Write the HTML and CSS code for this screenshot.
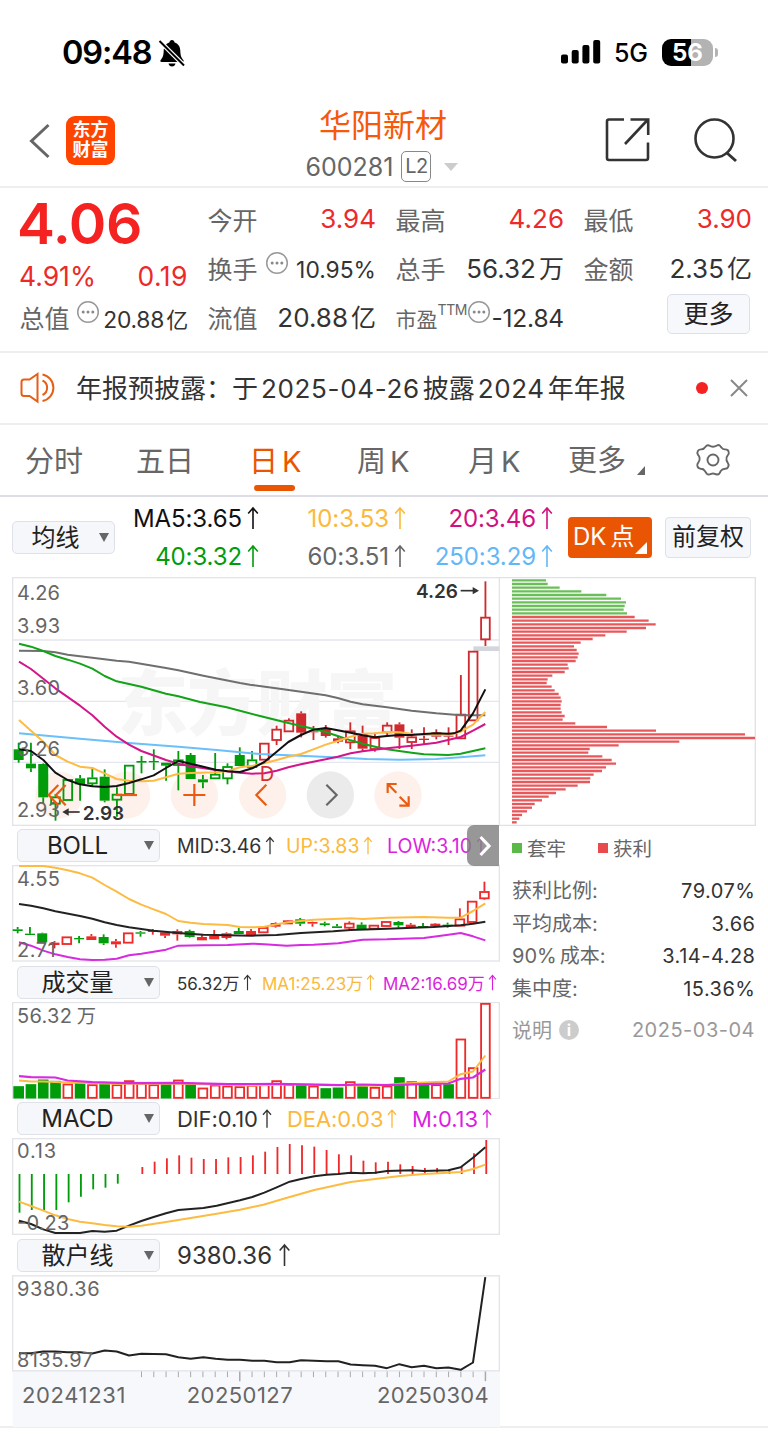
FILE: index.html
```html
<!DOCTYPE html>
<html lang="zh-CN">
<head>
<meta charset="utf-8">
<title>华阳新材 600281</title>
<link rel="stylesheet" href="styles.css">
</head>
<body>
<svg class="defs" width="0" height="0">
  <symbol id="up" viewBox="0 0 12 24"><path d="M6 23V2M1.2 7.5 6 2l4.800 5.500" fill="none" stroke="currentColor" stroke-width="1.600"/></symbol>
  <symbol id="more" viewBox="0 0 24 24"><circle cx="12" cy="12" r="10.300" fill="none" stroke="#999" stroke-width="1.500"/><g fill="#888"><circle cx="7.200" cy="12" r="1.500"/><circle cx="12" cy="12" r="1.500"/><circle cx="16.800" cy="12" r="1.500"/></g></symbol>
</svg>

<div class="status">
  <span class="clock">09:48</span>
  <svg class="bell" width="28" height="30" viewBox="0 0 28 30"><path d="M14 2c1.500 0 2.400 1 2.600 2.400 3.900 1.200 5.600 4.500 5.700 8.300.1 5.300 1.200 7 3 9.300.8 1.100.3 2-1 2H3.700c-1.300 0-1.800-.9-1-2 1.800-2.300 2.900-4 3-9.300.1-3.800 1.800-7.100 5.700-8.300C11.600 3 12.500 2 14 2ZM10.500 25.500h7c-.4 1.900-1.700 3-3.500 3s-3.100-1.100-3.500-3Z"/><path d="M2 3.500 26.500 28" stroke="#fff" stroke-width="4.500"/><path d="M1.500 3 26 27.500" stroke="#000" stroke-width="2"/></svg>
  <svg class="signal" width="40" height="26" viewBox="0 0 40 26"><rect y="15.500" width="7" height="9" rx="2"/><rect x="10.700" y="11" width="7" height="13.500" rx="2"/><rect x="21.400" y="6" width="7" height="18.500" rx="2"/><rect x="32.200" y="1" width="7" height="23.500" rx="2"/></svg>
  <span class="net">5G</span>
  <span class="battery">56</span><i class="nub"></i>
</div>

<header class="header">
  <svg class="back" width="22" height="36" viewBox="0 0 22 36"><path d="M19.500 2 2.500 18l17 16" fill="none" stroke="#666" stroke-width="3"/></svg>
  <div class="logo"><span>东方</span><span>财富</span></div>
  <div class="title">
    <h1>华阳新材</h1>
    <div class="code"><span>600281</span><b>L2</b><i></i></div>
  </div>
  <svg class="share" width="46" height="46" viewBox="0 0 46 46"><path d="M19 2.500H4q-2 0-2 2V41q0 2 2 2h37q2 0 2-2V25.500M25.500 2.500H43.200V18M42.500 3 20 27" fill="none" stroke="#333" stroke-width="2.600"/></svg>
  <svg class="search" width="46" height="46" viewBox="0 0 46 46"><circle cx="21.500" cy="21.500" r="19" fill="none" stroke="#333" stroke-width="2.600"/><path d="m34 36 9 8" stroke="#333" stroke-width="3"/></svg>
</header>

<section class="quote">
  <div class="price">
    <strong>4.06</strong>
    <div class="change"><span>4.91%</span><span class="delta">0.19</span></div>
    <div class="cell sm"><label>总值</label><svg class="dots" width="24" height="24"><use href="#more"/></svg><em>20.88<u>亿</u></em></div>
  </div>
  <div class="col">
    <div class="cell red"><label>今开</label><em>3.94</em></div>
    <div class="cell sm"><label>换手</label><svg class="dots gap" width="24" height="24"><use href="#more"/></svg><em>10.95%</em></div>
    <div class="cell"><label>流值</label><em>20.88<u>亿</u></em></div>
  </div>
  <div class="col">
    <div class="cell red"><label>最高</label><em>4.26</em></div>
    <div class="cell"><label>总手</label><em>56.32<u>万</u></em></div>
    <div class="cell pe"><label>市盈<sup>TTM</sup></label><svg class="dots" width="24" height="24"><use href="#more"/></svg><em>-12.84</em></div>
  </div>
  <div class="col">
    <div class="cell red"><label>最低</label><em>3.90</em></div>
    <div class="cell"><label>金额</label><em>2.35<u>亿</u></em></div>
    <div class="cell end"><button class="morebtn">更多</button></div>
  </div>
</section>

<section class="notice">
  <svg width="38" height="32" viewBox="0 0 38 32"><path d="M17.500 2 9.500 7.500H4q-2.500 0-2.500 2.500v11.500q0 2.500 2.500 2.500h5.500l8 5.500Z" fill="none" stroke="#e65f16" stroke-width="2"/><path d="M22.500 8.500a8 8 0 0 1 0 14.500M22.500 2.500a13.500 13.500 0 0 1 0 26.500" fill="none" stroke="#e65f16" stroke-width="2"/></svg>
  <p>年报预披露：<span>于<b>2025-04-26</b>披露<b>2024</b>年年报</span></p>
  <i class="reddot"></i>
  <svg width="18" height="18" viewBox="0 0 18 18"><path d="m1 1 16 16M17 1 1 17" stroke="#888" stroke-width="2"/></svg>
</section>

<nav class="tabs">
  <span>分时</span><span>五日</span><span class="active">日<b>K</b></span><span>周<b>K</b></span><span>月<b>K</b></span><span class="more">更多</span>
  <svg width="36" height="34" viewBox="0 0 36 34"><path d="M14 2.500q4 2.500 8 0 2-1.200 3.500.8l1.200 1.500q1.300 1.800 3.500 1.600 3 0 3.500 2.500.5 2-1 3.500-1.800 2.100-1.200 4.600.2 1.200 1.200 2.600 1.500 2 .5 4.200-.8 2-3 2-3 0-4.500 2.200-1.200 3.700-3.700 3.500-1.200 0-2.200-.6-1.800-.9-3.600 0-3 1.500-4.500-.3l-2-2.800q-1.200-2-4-2-2.600-.2-3.300-2.700-.5-2 1-3.700 1.800-2.400 1.100-5-.3-1.200-1.500-2.500Q1.700 9.500 3 7.700q1-1.400 3.300-1.300 2.700-.2 4-2.400Q12 1.700 14 2.500Z" fill="none" stroke="#666" stroke-width="1.900"/><circle cx="18" cy="17" r="5.500" fill="none" stroke="#666" stroke-width="1.900"/></svg>
</nav>

<section class="mabar">
  <button class="drop small">均线<i></i></button>
  <div class="mas">
    <span class="black">MA5:3.65<svg><use href="#up"/></svg></span>
    <span class="yellow">10:3.53<svg><use href="#up"/></svg></span>
    <span class="pink">20:3.46<svg><use href="#up"/></svg></span>
    <span class="green">40:3.32<svg><use href="#up"/></svg></span>
    <span class="gray">60:3.51<svg><use href="#up"/></svg></span>
    <span class="blue">250:3.29<svg><use href="#up"/></svg></span>
  </div>
  <button class="dk">DK<u>点</u></button>
  <button class="fq">前复权</button>
</section>

<main class="main">
  <div class="left">
    <svg id="kline" width="488" height="249" viewBox="36 21 1464 747"></svg>
    <div class="ind">
      <button class="drop">BOLL<i></i></button>
      <div class="vals boll"><span>MID:3.46<svg><use href="#up"/></svg></span><span class="yellow">UP:3.83<svg><use href="#up"/></svg></span><span class="purple">LOW:3.10<svg><use href="#up"/></svg></span></div>
      <div class="expand"><svg width="14" height="22" viewBox="0 0 14 22"><path d="m2.500 2 8.500 9-8.500 9" fill="none" stroke="#fff" stroke-width="3.200"/></svg></div>
    </div>
    <svg id="boll" width="488" height="97.500" viewBox="36 120 1464 292.500"></svg>
    <div class="ind">
      <button class="drop">成交量<i></i></button>
      <div class="vals vol"><span>56.32万<svg><use href="#up"/></svg></span><span class="yellow">MA1:25.23万<svg><use href="#up"/></svg></span><span class="purple">MA2:16.69万<svg><use href="#up"/></svg></span></div>
    </div>
    <svg id="volume" width="488" height="97.500" viewBox="36 529.500 1464 292.500"></svg>
    <div class="ind">
      <button class="drop">MACD<i></i></button>
      <div class="vals macd"><span>DIF:0.10<svg><use href="#up"/></svg></span><span class="yellow">DEA:0.03<svg><use href="#up"/></svg></span><span class="purple">M:0.13<svg><use href="#up"/></svg></span></div>
    </div>
    <svg id="macd" width="488" height="97.500" viewBox="36 129 1464 292.500"></svg>
    <div class="ind">
      <button class="drop">散户线<i></i></button>
      <div class="vals retail"><span>9380.36<svg><use href="#up"/></svg></span></div>
    </div>
    <svg id="retail" width="488" height="152.500" viewBox="36 538.500 1464 457.500"></svg>
  </div>
  <aside class="right">
    <svg id="chips" width="256" height="249" viewBox="0 21 768 747"></svg>
    <div class="legend"><i class="lg"></i><span>套牢</span><i class="lr"></i><span>获利</span></div>
    <dl class="stats">
      <div><dt>获利比例:</dt><dd>79.07%</dd></div>
      <div><dt>平均成本:</dt><dd>3.66</dd></div>
      <div><dt><b>90%</b>成本:</dt><dd>3.14-4.28</dd></div>
      <div><dt>集中度:</dt><dd>15.36%</dd></div>
    </dl>
    <div class="foot"><span>说明</span><i>i</i><time>2025-03-04</time></div>
  </aside>
</main>
<script src="charts.js"></script>
</body>
</html>
```

FILE: styles.css
```css
* { box-sizing: border-box; }
body { margin: 0; width: 768px; height: 1445px; overflow: hidden; background: #fff; color: #333; font-family: Inter, "Noto Sans CJK SC", sans-serif; }
b, em, i, u, h1, button, strong { font: inherit; text-decoration: none; margin: 0; }
p, dl, dd { margin: 0; }
svg { display: block; flex: none; }
.defs { position: absolute; }
span, label { white-space: nowrap; }

.status { display: flex; align-items: center; height: 90px; padding: 14px 0 0 62px; color: #000; }
.clock { font-size: 32.500px; font-weight: 600; width: 96px; letter-spacing: -1.100px; }
.bell { margin-top: 2px; }
.signal { margin-left: 375px; }
.net { font-size: 25px; font-weight: 500; margin-left: 13px; width: 48px; letter-spacing: -.2px; padding-top: 2px; }
.battery { width: 51px; height: 27px; border-radius: 9px; background: linear-gradient(90deg, #000 57%, #b3b3b3 57%); color: #fff; font-size: 24px; font-weight: 700; line-height: 27px; text-align: center; }
.nub { width: 3px; height: 9px; margin-left: 2px; border-radius: 0 4px 4px 0; background: #b3b3b3; }

.header { display: flex; align-items: center; height: 98px; padding: 4px 0 0 29px; border-bottom: 2px solid #eee; }
.back { margin-top: 1px; }
.logo { display: flex; flex-direction: column; justify-content: center; width: 49px; height: 49px; margin-left: 15px; border-radius: 9px; background: #ff4400; color: #fff; font-size: 18px; font-weight: 700; line-height: 20px; text-align: center; }
.title { width: 240px; margin-left: 148px; padding-top: 12px; text-align: center; }
.title h1 { color: #f6590c; font-size: 32px; line-height: 42px; }
.code { display: flex; justify-content: center; align-items: center; height: 42px; margin-top: -1px; font-size: 25px; color: #666; letter-spacing: 0; padding-right: 2px; }
.code b { width: 30px; height: 31px; margin-left: 8px; border: 1.500px solid #888; border-radius: 5px; font-size: 20px; line-height: 29px; letter-spacing: -.5px; }
.code i { margin-left: 13px; border: 7px solid transparent; border-top: 8px solid #ccc; border-bottom: 0; }
.share { margin-left: 102px; }
.search { margin-left: 42px; }

.quote { display: grid; grid-template-columns: repeat(4, 168px); gap: 20px; height: 165px; padding: 7px 0 0 20px; border-bottom: 2px solid #eee; }
.col { margin-top: -1px; }
.price strong { display: block; height: 56px; margin-left: -3px; color: #f52222; font-size: 57px; font-weight: 600; line-height: 57px; letter-spacing: -.4px; }
.change { display: flex; justify-content: space-between; height: 41px; margin-left: -1px; padding-top: 4px; font-size: 26.500px; line-height: 42px; color: #ec2a2a; letter-spacing: 0; }
.delta { letter-spacing: .5px; }
.cell { display: flex; align-items: center; justify-content: space-between; height: 49px; font-size: 26px; }
.cell label { color: #666; font-size: 25px; margin-left: -.5px; }
.cell em { letter-spacing: 0; margin-top: -1px; }
.cell u { margin-left: 3px; font-size: 25px; }
.cell.red em { color: #ec2a2a; }
.cell.sm em { font-size: 22.800px; padding-top: 4px; }
.cell.sm u { font-size: 22px; margin-left: 2px; }
.cell .dots { margin: -10px 0 0 4px; }
.cell .gap { margin-right: 4px; }
.price .cell em { letter-spacing: -.2px; }
.cell.pe label { font-size: 21px; padding-top: 3px; }
.pe sup { display: inline-block; font-size: 14px; line-height: 10px; vertical-align: 12px; letter-spacing: -.4px; }
.cell.pe .dots { margin-left: 0; }
.cell.pe em { font-size: 24.500px; letter-spacing: -.2px; padding-top: 3px; }
.cell.end { justify-content: flex-end; }
.morebtn { width: 83px; height: 40px; margin: -5px 2px 0 0; padding: 0; border: 1.500px solid #dde0ea; border-radius: 5px; background: #f7f8fc; color: #222; font-size: 25px; line-height: 36px; }

.notice { display: flex; align-items: center; height: 72px; padding-left: 20px; border-bottom: 2px solid #eee; }
.notice p { width: 617px; margin: -4px 0 0 18px; font-size: 26px; white-space: nowrap; }
.notice b { margin: 0 3px; letter-spacing: .65px; }
.reddot { width: 12px; height: 12px; margin: 0 22px 0 3px; border-radius: 50%; background: #f52222; }

.tabs { display: flex; height: 72px; border-bottom: 2px solid #dddde6; color: #666; font-size: 29px; line-height: 73px; padding-left: 25px; }
.tabs span { width: 111px; }
.tabs b { margin-left: 4px; }
.tabs .active { position: relative; display: flex; width: 108px; margin-left: 2px; color: #ea5504; }
.tabs .active::after { content: ""; position: absolute; left: 5px; bottom: 4px; width: 41px; height: 6px; border-radius: 3px; background: #ea5504; }
.tabs .more { width: 127px; display: flex; align-items: center; margin-left: -11px; }
.tabs .more::after { content: ""; margin: 20px 0 0 11px; border-left: 8px solid transparent; border-bottom: 9px solid #666; }
.tabs svg { margin-top: 18px; }

.mabar { display: flex; align-items: center; height: 80px; padding-left: 12px; }
.drop { position: relative; flex: none; width: 143px; height: 33px; margin: 0; padding: 0 22px 0 0; border: 1.500px solid #dfe1e8; border-radius: 5px; background: #f6f7fb; color: #222; font-size: 24px; line-height: 29px; text-align: center; }
.drop i { position: absolute; right: 5px; top: 11px; border: 5px solid transparent; border-top: 9px solid #666; border-bottom: 0; }
.drop.small { width: 103px; padding-right: 16px; }
.mas { display: grid; grid-template-columns: 144px 147px 147px; grid-auto-rows: 38px; width: 453px; font-size: 24px; }
.mas span { display: flex; align-items: center; justify-content: flex-end; letter-spacing: -.1px; }
.mas svg { width: 12px; height: 24px; margin-left: 5px; }
.black { color: #111; } .yellow { color: #fbb93c; } .pink { color: #d0117f; } .green { color: #009c0a; } .gray { color: #666; } .blue { color: #62b8f6; } .purple { color: #dc1fdf; }
.dk, .fq { height: 41px; padding: 0; border-radius: 4px; font-size: 24px; line-height: 38px; white-space: nowrap; }
.dk { position: relative; width: 84px; border: 0; background: #ea5504; color: #fff; text-align: left; padding-left: 5px; }
.dk u { margin-left: 4px; }
.dk::after { content: ""; position: absolute; right: 5px; bottom: 4px; border-left: 12px solid transparent; border-bottom: 12px solid #fff; }
.fq { width: 86px; margin-left: 13px; border: 1.500px solid #dfe1e8; background: #f6f7fb; color: #222; }

.main { display: grid; grid-template-columns: 488px 256px; padding-left: 12px; height: 851px; border-bottom: 2px solid #eee; }
.ind { position: relative; display: flex; align-items: center; height: 39px; padding-left: 5px; }
.vals { display: grid; margin-left: 17px; font-size: 20px; }
.vals span { display: flex; align-items: center; color: inherit; }
.vals .yellow { color: #fbb93c; } .vals .purple { color: #dc1fdf; }
.vals svg { width: 10px; height: 19px; margin-left: 4px; }
.boll { grid-template-columns: 109px 101px 110px; font-size: 19.500px; }
.vol { grid-template-columns: 85px 121px 118px; font-size: 17px; }
.vol svg { height: 17px; width: 9px; margin-left: 3px; }
.macd { grid-template-columns: 110px 125px 90px; font-size: 22px; letter-spacing: -.1px; }
.macd svg { height: 21px; }
.retail { font-size: 24px; }
.retail svg { height: 24px; width: 13px; margin-left: 6px; }
.expand { position: absolute; right: 1px; top: -1px; width: 32px; height: 41px; padding: 10px 0 0 11px; border-radius: 7px 0 0 7px; background: rgba(128,128,128,.82); }

.legend { display: flex; align-items: center; height: 43px; padding-left: 12px; font-size: 19.500px; color: #666; }
.legend i { width: 10px; height: 10px; margin-right: 5px; }
.lg { background: #5bb947; } .lr { background: #e84a4d; margin-left: 32px; }
.stats { padding: 6px 1px 0 12px; font-size: 20px; }
.stats div { display: flex; justify-content: space-between; height: 32.700px; line-height: 32px; }
.stats dt { color: #666; } .stats dt b { margin-right: 3px; }
.stats dd { letter-spacing: .5px; margin-right: -.5px; }
.foot { display: flex; align-items: center; height: 30px; margin-top: 9px; padding: 0 1px 0 12px; color: #999; font-size: 20px; }
.foot i { width: 20px; height: 20px; margin-left: 7px; border-radius: 50%; background: #ccc; color: #fff; font-size: 16px; font-weight: 700; line-height: 20px; text-align: center; }
.foot time { margin-left: auto; letter-spacing: .5px; }
```

FILE: charts.js
```js
// Chart units are thirds of a CSS pixel.
const STEP = 36.85, X0 = 56;
const GREEN = '#009c0a', RED = '#cf2b2f', BRIGHT = '#ee2a2a';
const x = i => X0 + STEP * i;
const line = (pts, color, w = 6) => `<polyline points="${pts}" fill="none" stroke="${color}" stroke-width="${w}" stroke-linejoin="round"/>`;
const seg = (x1, y1, x2, y2, c, w) => `<path d="M${x1} ${y1}L${x2} ${y2}" stroke="${c}" stroke-width="${w}"/>`;
const text = (s, px, py, size, len, color = '#666', extra = '') => `<text x="${px}" y="${py}" font-size="${size}" textLength="${len}" fill="${color}" ${extra}>${s}</text>`;
const frame = (y1, y2) => `<rect x="38" y="${y1}" width="1460" height="${y2 - y1}" fill="none" stroke="#e3e4ea" stroke-width="4"/>`;
const put = (id, s) => { document.getElementById(id).innerHTML = s; };

// Candle: [colour, hollow, high, top, bottom, low]
function candles(list, red, dx = 0) {
  return list.map(([c, h, hi, t, b, lo], i) => {
    const col = c === 'g' ? GREEN : red, cx = x(i) + dx;
    let s = '';
    if (hi < t) s += seg(cx, hi, cx, t, col, 5.5);
    if (lo > b) s += seg(cx, b, cx, lo, col, 5.5);
    return s + (h
      ? `<rect x="${cx - 13}" y="${t + 2}" width="26" height="${b - t - 3}" fill="none" stroke="${col}" stroke-width="5.500"/>`
      : `<rect x="${cx - 15}" y="${t}" width="30" height="${b - t}" fill="${col}"/>`);
  }).join('');
}

const day = [
  ['g',0,518,538,570,578],['g',0,518,581,595,606],['g',0,580,582,682,700],['g',1,672,680,702,752],['g',1,628,628,691,691],
  ['g',0,615,625,643,692],['g',1,592,623,641,650],['g',0,598,620,692,697],['g',1,652,672,690,740],['g',1,585,585,673,673],
  ['g',0,558,573,578,610],['g',0,538,573,577,600],['g',0,578,578,587,632],['g',1,543,569,586,661],['g',0,549,555,627,627],
  ['g',0,615,628,637,655],['g',1,549,612,626,626],['g',1,580,589,626,643],['g',0,532,555,588,588],['g',1,543,569,592,595],
  ['r',1,519,519,570,570],['r',1,467,477,511,525],['r',1,445,450,485,485],['r',0,424,430,488,502],['r',0,468,484,487,510],
  ['r',0,465,475,498,503],['r',0,498,505,515,520],['r',1,457,482,518,537],['r',0,467,490,536,543],['r',1,488,502,538,545],
  ['r',1,457,465,488,500],['r',0,457,463,503,537],['r',1,478,500,517,537],['r',0,472,506,510,525],['r',0,478,487,500,508],
  ['r',0,472,497,500,525],['r',1,315,432,506,506],['r',1,243,243,452,452],['r',1,34,141,209,228]
];

const nav = [177, 380, 583, 788, 991, 1194];
const glyphs = ['M175 645l-29 30 29 31M197 645l-29 30 29 31', 'M347 675h64', 'M550 675h66M583 642v66', 'M799 644l-30 31 30 31', 'M979 644l31 31-31 31', 'M1190 642h-27v27M1164 643l25 25M1198 707h28v-28M1225 706l-26-26'];

put('kline',
  [210, 394, 577].map(y => seg(36, y, 1498, y, '#e5e6ef', 4)).join('') +
  `<text x="352" y="477" font-size="213" textLength="840" fill="#f6f6f7" font-weight="900">东方财富</text>` +
  frame(23, 766) +
  nav.map((c, i) => `<circle cx="${c}" cy="675" r="71" fill="${i === 4 ? '#ebebeb' : '#fef0ea'}"/>`).join('') +
  `<path d="M1420 236h78" stroke="#d3d6dc" stroke-width="14"/>` +
  candles(day, RED) +
  line('57,490 240,506 387,519 535,530 650,540 780,552 1000,562 1100,567 1200,569 1309,567 1382,562 1456,556', '#6ac0fa') +
  line('57,242 130,243 166,247 203,254 277,263 350,272 387,275 498,294 535,301 610,317 720,339 750,344 850,358 977,376 1013,384 1052,395 1088,403 1161,412 1235,422 1309,430 1382,436 1456,436', '#6f6f6f') +
  line('57,221 93,230 130,243 166,258 203,269 240,281 277,296 314,318 350,334 424,350 498,371 535,379 600,396 680,412 780,438 865,459 920,472 977,486 1013,498 1052,511 1088,521 1125,530 1161,538 1235,548 1272,553 1345,555 1382,551 1419,543 1456,535', '#12a318') +
  line('57,275 93,297 130,326 166,355 240,407 277,436 314,470 350,500 387,524 424,543 498,570 535,581 572,589 647,600 720,608 757,611 793,610 830,602 865,592 903,583 940,575 977,568 1013,560 1052,550 1088,544 1161,535 1235,527 1309,518 1382,501 1419,482 1456,462', '#d3158a') +
  line('57,450 93,482 130,515 166,555 203,575 240,590 277,594 314,610 350,627 387,632 424,634 461,632 498,622 535,611 572,609 647,607 683,603 720,592 757,587 793,580 830,570 865,560 903,552 940,538 977,524 1013,513 1052,500 1088,491 1125,490 1161,486 1198,487 1235,491 1272,494 1345,494 1382,485 1419,464 1456,426', '#fdbb42') +
  line('57,538 93,543 130,570 166,608 203,630 240,643 277,649 314,651 350,648 387,639 424,628 461,616 498,594 535,573 572,581 610,590 647,599 683,604 720,606 757,595 793,576 830,545 865,516 903,495 940,479 977,474 1013,481 1052,488 1088,496 1125,502 1161,498 1198,495 1235,495 1272,492 1309,490 1345,491 1362,490 1382,482 1419,430 1456,358', '#111') +
  [['4.26', 90], ['3.93', 188], ['3.60', 375], ['3.26', 557], ['2.93', 741]].map(([s, y]) => text(s, 51, y, 60, 129)).join('') +
  glyphs.map((d, i) => `<path d="${d}" fill="none" stroke="${i === 4 ? '#666' : '#ea5a10'}" stroke-width="6.500"/>`).join('') +
  text('D', 779, 632, 60, 42, '#d42f35') +
  text('4.26', 1248, 83, 57, 126, '#333', 'font-weight="600"') +
  `<path d="M1382 62h42" stroke="#333" stroke-width="5"/><path d="M1418 51l19 11-19 11z" fill="#333"/>` +
  text('2.93', 248, 749, 57, 124, '#333', 'font-weight="600"') +
  `<path d="M203 726h36" stroke="#333" stroke-width="5"/><path d="M206 715l-19 11 19 11z" fill="#333"/>`
);

const bollDay = [
  ['g',0,306,313,318,325],['g',0,306,326,330,330],['g',0,323,325,352,352],['r',0,348,353,360,370],['r',1,335,335,358,358],
  ['g',0,333,339,343,355],['r',0,327,334,345,345],['g',0,328,336,355,360],['r',0,342,349,358,368],['r',1,323,323,354,354],
  ['g',0,318,322,326,335],['r',0,312,317,321,329],['r',0,320,322,332,339],['r',0,313,318,328,347],['g',0,314,318,336,338],
  ['r',0,330,336,346,346],['r',0,315,333,343,343],['r',0,322,325,339,343],['g',0,309,318,327,327],['r',0,312,318,330,330],
  ['r',1,307,307,323,323],['r',0,292,294,305,308],['r',0,285,286,298,298],['g',0,279,283,296,303],['r',0,290,291,296,305],
  ['g',0,290,295,300,304],['g',0,297,304,309,309],['r',1,289,294,309,314],['g',0,292,299,312,312],['r',1,300,300,312,312],
  ['r',1,289,289,304,304],['g',0,288,291,301,308],['r',0,294,299,307,307],['g',0,294,303,307,307],['r',0,294,296,305,305],
  ['g',0,293,299,303,308],['r',1,250,281,303,303],['r',1,228,228,292,292],['r',1,170,199,221,224]
];
put('boll', frame(122, 408) + candles(bollDay, BRIGHT, -3) +
  line('57,123 130,123 166,128 203,136 240,145 277,158 314,180 350,200 387,222 424,239 461,253 498,267 535,288 572,293 610,297 683,300 720,306 757,307 793,305 830,298 865,292 940,284 1000,282 1052,280 1088,282 1161,278 1272,276 1345,278 1382,278 1419,258 1456,235', '#fdbb42') +
  line('57,237 93,242 130,250 166,259 240,273 277,281 314,292 350,300 387,307 461,317 535,324 610,329 683,331 757,332 830,330 903,324 1000,319 1052,315 1161,311 1300,306 1382,301 1419,296 1456,290', '#222') +
  line('57,352 93,362 130,377 166,388 203,396 240,403 277,405 314,404 350,401 387,391 424,386 498,374 535,362 610,361 683,360 757,356 793,358 860,362 903,360 940,359 1015,355 1088,344 1161,343 1272,339 1345,329 1382,324 1419,334 1456,346', '#d62be0') +
  text('4.55', 51, 182, 60, 129) + text('2.71', 51, 396, 60, 116));

const volKinds = 'ggggrgrgrrrrgrgrrrrrrrrgrggrgrrgrgrgrrr';
const volTops = [782,776,762,766,776,770,778,775,778,766,773,778,776,764,776,788,779,782,784,780,778,766,777,777,782,788,786,769,782,786,782,755,769,777,778,776,641,727,534];
put('volume', frame(531, 820) +
  volTops.map((t, i) => volKinds[i] === 'g'
    ? `<rect x="${x(i) - 16}" y="${t}" width="32" height="${819 - t}" fill="${GREEN}"/>`
    : `<rect x="${x(i) - 13}" y="${t + 1}" width="26" height="${816 - t}" fill="none" stroke="${BRIGHT}" stroke-width="5.500"/>`).join('') +
  line('57,765 93,768 130,768 203,771 350,775 535,774 683,778 757,780 865,776 977,778 1125,781 1200,775 1272,771 1345,768 1382,746 1419,738 1456,690', '#fdbb42') +
  line('57,752 93,755 166,756 203,765 277,770 387,773 535,772 683,776 830,775 1015,779 1088,777 1161,779 1272,776 1345,774 1382,760 1419,756 1456,732', '#d62be0', 6.5) +
  text('56.32', 51, 592, 60, 165) + text('万', 230, 592, 58, 56));

const hist = [353,345,345,345,322,305,283,278,266,237,216,200,190,181,188,192,192,187,186,181,170,156,147,151,155,165,178,181,197,202,200,208,213,219,219,222,215,175,135];
put('macd', frame(131, 418) +
  hist.map((v, i) => seg(x(i) + 2.5, 237, x(i) + 2.5, v, v > 237 ? GREEN : BRIGHT, 5.5)).join('') +
  line('57,377 93,387 130,403 166,414 240,414 277,408 314,410 350,407 387,392 424,378 461,366 498,355 535,345 610,339 650,332 720,316 757,306 793,293 830,277 869,260 903,252 943,244 980,239 1015,237 1052,233 1088,235 1125,233 1161,228 1235,226 1272,228 1345,226 1382,217 1419,188 1456,157', '#222') +
  line('57,320 93,333 130,347 166,361 203,372 240,380 277,385 314,390 350,394 387,395 424,392 498,381 572,369 650,356 720,344 790,329 869,306 943,285 1015,269 1052,261 1125,252 1200,243 1272,237 1345,233 1382,231 1419,222 1456,209', '#fdbb42') +
  text('0.13', 51, 190, 60, 117) + text('-0.23', 51, 404, 60, 157));

let ticks = '';
for (let i = 10; i <= 38; i++) ticks += seg(x(i), 828, x(i), i === 18 || i === 38 ? 857 : 845, '#aaa', i === 18 || i === 38 ? 4.5 : 3);
put('retail', '<rect x="38" y="826" width="1462" height="170" fill="#f7f8fb"/>' + frame(541, 826) + ticks +
  line('57,773 93,773 130,768 166,768 203,770 240,770 277,774 314,765 350,768 387,780 424,775 498,776 535,785 572,790 610,785 647,790 683,793 720,793 757,796 793,796 830,800 869,800 903,794 980,797 1015,797 1052,807 1088,809 1125,811 1161,818 1198,806 1235,815 1272,811 1309,818 1345,816 1382,823 1419,801 1456,545', '#222') +
  text('9380.36', 51, 601, 60, 248) + text('8135.97', 51, 813, 60, 228) +
  text('20241231', 66, 923, 66, 310) + text('20250127', 560, 923, 66, 318) + text('20250304', 1131, 923, 66, 335));

const chips = [138,143,179,244,319,363,378,374,371,381,404,446,467,438,380,316,278,242,222,230,236,233,227,203,206,194,157,143,140,155,164,176,182,185,182,182,185,194,188,226,321,468,735,765,538,356,269,265,307,335,348,318,306,281,271,270,233,197,168,146,126,104,96,81,66,58,50];
put('chips', '<path d="M0 23H766V766H0" fill="none" stroke="#e0e1e7" stroke-width="4"/>' +
  chips.map((e, i) => seg(36, 31 + 11 * i, e, 31 + 11 * i, i < 10 ? '#6abf59' : '#e8575a', 7)).join(''));
```
